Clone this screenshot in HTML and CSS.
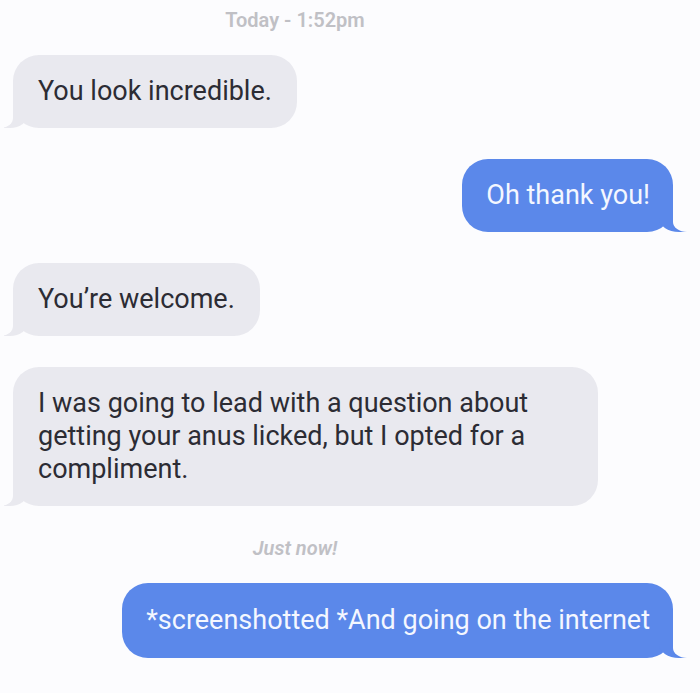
FILE: index.html
```html
<!DOCTYPE html>
<html lang="en">
<head>
<meta charset="utf-8">
<title>Messages</title>
<link rel="stylesheet" href="styles.css">
</head>
<body>
<main class="thread">
  <div class="stamp">Today - 1:52pm</div>
  <div class="bubble in">You look incredible.</div>
  <div class="bubble out">Oh thank you!</div>
  <div class="bubble in">You’re welcome.</div>
  <div class="bubble in wide">I was going to lead with a question about getting your anus licked, but I opted for a compliment.</div>
  <div class="stamp italic">Just now!</div>
  <div class="bubble out">*screenshotted *And going on the internet</div>
</main>
</body>
</html>
```
FILE: styles.css
```css
html, body {
  margin: 0;
  padding: 0;
  background: #fcfcfe;
}
body {
  width: 700px;
  height: 693px;
  overflow: hidden;
  font-family: Roboto, "Liberation Sans", sans-serif;
}
.thread {
  display: flex;
  flex-direction: column;
  padding: 9px 27px 0 13px;
}
.stamp {
  align-self: stretch;
  text-align: center;
  padding-right: 96px;
  font-size: 20px;
  line-height: 22px;
  font-weight: 600;
  color: #c0c0c5;
  margin-bottom: 24px;
}
.stamp.italic {
  font-style: italic;
  font-size: 20px;
  margin-top: 0;
  margin-bottom: 24px;
}
.bubble {
  position: relative;
  padding: 20px 25px;
  border-radius: 26px;
  font-size: 27px;
  line-height: 33px;
  margin-bottom: 31px;
  max-width: 540px;
}
.bubble.in {
  align-self: flex-start;
  background: #e9e9ef;
  color: #2c2c34;
}
.bubble.wide {
  width: 535px;
}
.bubble.out {
  align-self: flex-end;
  background: #5b88ea;
  color: #f4f7ff;
  padding-left: 24px;
  padding-right: 23px;
}
.bubble.out:last-child {
  padding-top: 21px;
  padding-bottom: 21px;
}
.bubble.in::before {
  content: "";
  position: absolute;
  left: -9px;
  bottom: 0;
  width: 24px;
  height: 26px;
  background: #e9e9ef;
  border-bottom-right-radius: 18px 14px;
}
.bubble.in::after {
  content: "";
  position: absolute;
  left: -26px;
  bottom: 0;
  width: 26px;
  height: 28px;
  background: #fcfcfe;
  border-bottom-right-radius: 12px 10px;
}
.bubble.out::before {
  content: "";
  position: absolute;
  right: -14px;
  bottom: 0;
  width: 28px;
  height: 26px;
  background: #5b88ea;
  border-bottom-left-radius: 20px 14px;
}
.bubble.out::after {
  content: "";
  position: absolute;
  right: -28px;
  bottom: 0;
  width: 28px;
  height: 28px;
  background: #fcfcfe;
  border-bottom-left-radius: 14px 10px;
}
```
